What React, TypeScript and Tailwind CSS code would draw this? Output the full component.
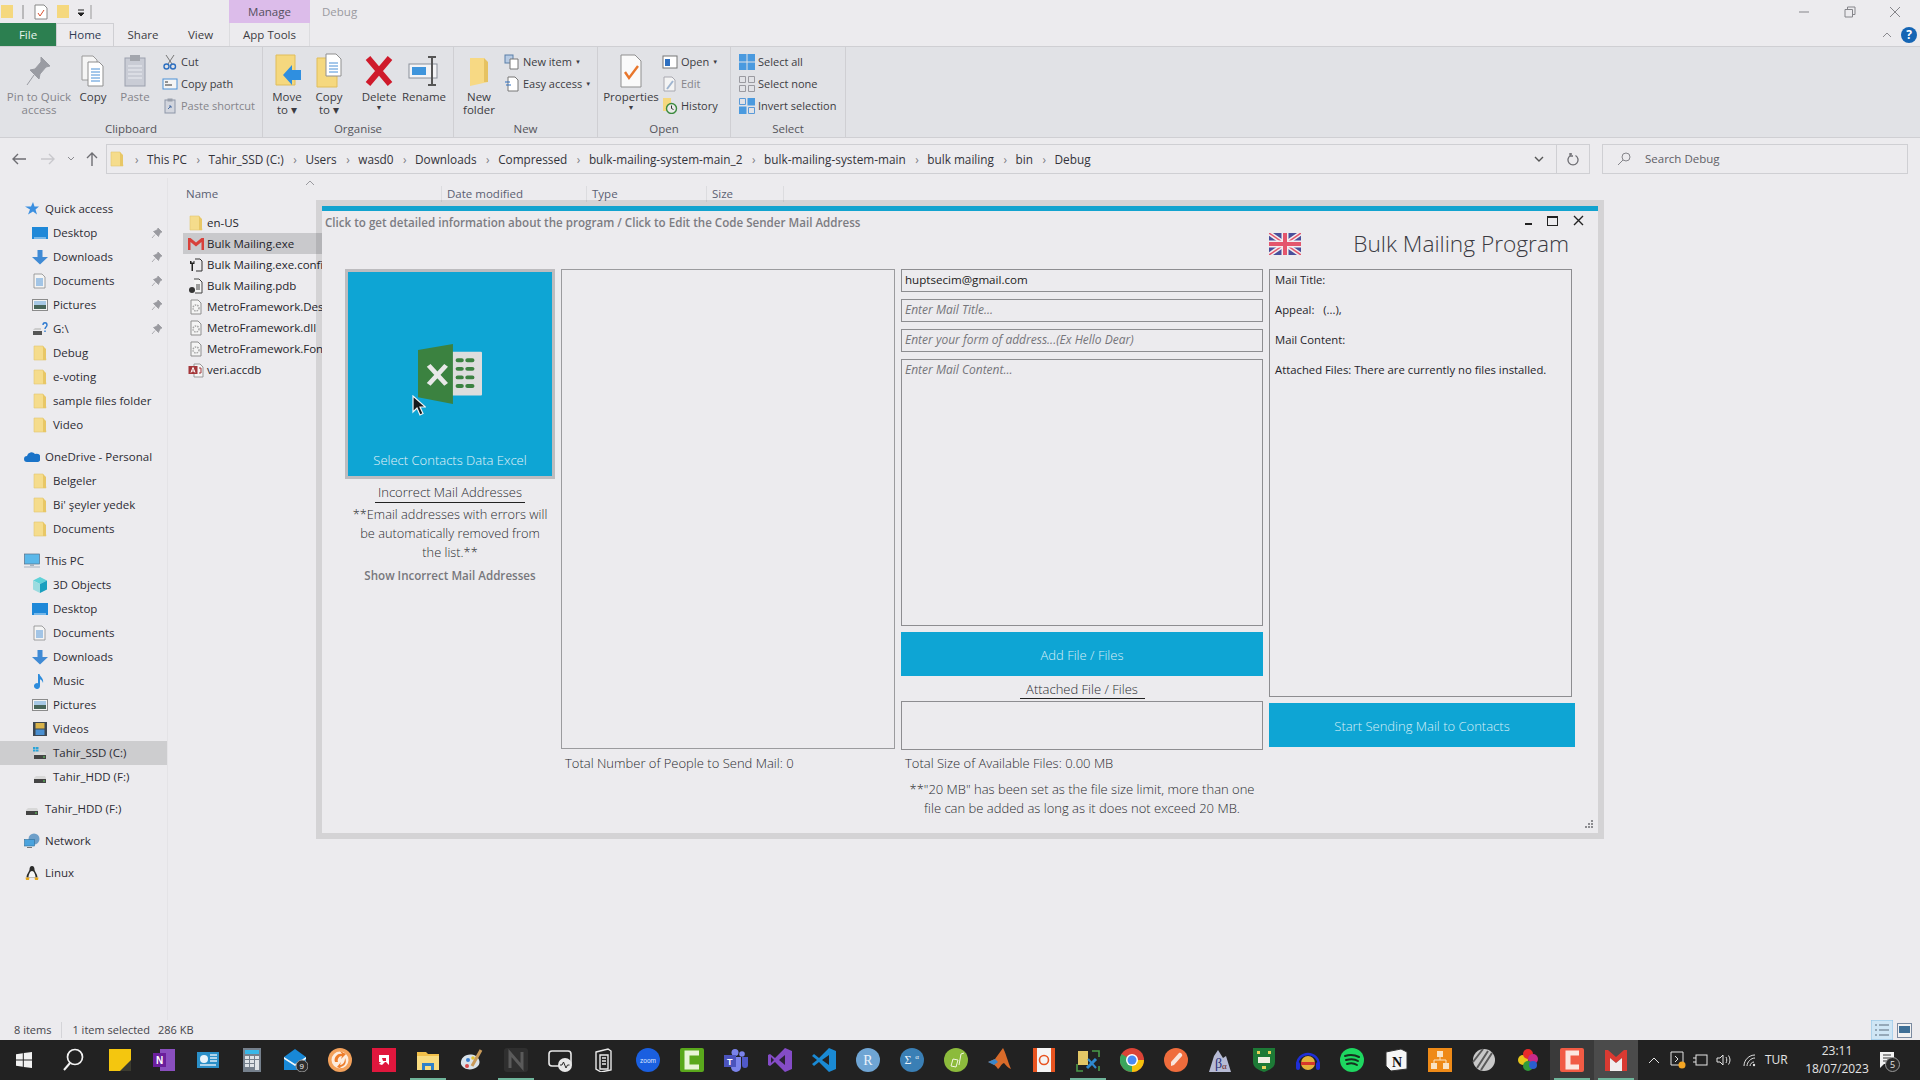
import type { ReactNode } from "react";

function Folder({ size = 16 }: { size?: number }) {
    return (
        <svg width={size} height={size} viewBox="0 0 16 16" className="shrink-0">
            <path d="M2 1h9l3 14H2z" fill="#f5dc8c" stroke="#e3c770" strokeWidth="0.6" />
            <path d="M11 1l3 3v11h-3z" fill="#e8c766" />
        </svg>
    );
}

function Pin() {
    return (
        <svg width="12" height="12" viewBox="0 0 12 12">
            <path d="M7 1l4 4-1.500.5L8 8 7.500 9.500 2.500 4.500 4 4l2.500-1.500zM4 7.500L1 11" fill="#9a9aa0" stroke="#9a9aa0" strokeWidth="0.8" />
        </svg>
    );
}

function Drive({ windows = false }: { windows?: boolean }) {
    return (
        <svg width="16" height="16" viewBox="0 0 16 16" className="shrink-0">
            {windows && <path d="M1 2h2.500v2H1zM4 2h2.500v2H4zM1 4.500h2.500v2H1zM4 4.500h2.500v2H4z" fill="#2aa4d8" />}
            <path d="M2 9l2-2h9l1 2v4H2z" fill="#d8d8d8" />
            <rect x="2" y="10" width="12" height="4" fill="#444" />
            <rect x="11" y="11.500" width="2" height="1" fill="#5fd35f" />
        </svg>
    );
}

function NavIcon({ kind }: { kind: string }) {
    if (kind === "folder") return <Folder />;
    if (kind === "drive") return <Drive />;
    if (kind === "ssd") return <Drive windows />;
    const body: Record<string, ReactNode> = {
        star: <path d="M9 1l1.500 4.500H15l-3.500 3 1.500 5-4-3-5 3 2-5-5-3h6z" fill="#3b8fe0" />,
        desktop: <><rect x="0" y="2" width="16" height="12" fill="#1e88d8" /><rect x="2" y="12.500" width="12" height="1" fill="#cfe8fa" /></>,
        down: <path d="M5.500 1h5v7H16l-8 7.500L0 8h5.500z" fill="#3f8ad4" />,
        doc: <><path d="M2 1h8l3 3v11H2z" fill="#f4f4f4" stroke="#8b8b8b" strokeWidth="0.8" /><path d="M4 6h7M4 8h7M4 10h7M4 12h7" stroke="#3f8ad4" strokeWidth="0.9" /></>,
        pic: <><rect x="0.500" y="2.500" width="15" height="11" fill="#f4f4f4" stroke="#8b8b8b" /><rect x="2" y="4" width="12" height="4" fill="#a7c9e6" /><rect x="2" y="8" width="12" height="4" fill="#47665a" /></>,
        g: <><path d="M1 9l2-2h6v2z" fill="#ccc" /><rect x="1" y="10" width="9" height="4" fill="#555" /><path d="M11 4c0-3 4-3 4 0 0 2-2 2-2 4M13 9.500v1.500" stroke="#2f7bd0" strokeWidth="1.400" fill="none" /></>,
        cloud: <path d="M3 13a3 3 0 0 1 0-6 4.500 4.500 0 0 1 8-2 3.500 3.500 0 0 1 3 8z" fill="#1a73c8" />,
        pc: <><rect x="0.500" y="1" width="15" height="10" fill="#5bb8ea" stroke="#55708a" strokeWidth="0.7" /><path d="M6 11h4v2H6zM0 13.500h16v1H0z" fill="#a8b4bf" /></>,
        cube: <><path d="M8 0l7 3.500-7 3.500-7-3.500z" fill="#5fd2d8" /><path d="M1 3.500L8 7v9l-7-3.500z" fill="#9bdce0" /><path d="M15 3.500L8 7v9l7-3.500z" fill="#1aa0bf" /></>,
        music: <path d="M6 1h1.500c.5 3 4.500 4 3.500 9-.3-2-2-3.500-3-3.800V13a3 3 0 1 1-2-2.800z" fill="#2d8cdc" />,
        video: <><rect x="1" y="1" width="14" height="14" fill="#3d4650" /><rect x="3.500" y="2" width="9" height="5.500" fill="#d9b34a" /><rect x="3.500" y="8.500" width="9" height="5.500" fill="#4a8fd0" /></>,
        net: <><circle cx="10" cy="6" r="5.500" fill="#6e9fc9" /><rect x="0.500" y="6.500" width="10" height="6.500" fill="#4ba3dd" stroke="#2d6f9c" strokeWidth="0.6" /><path d="M3 14.500h5" stroke="#777" /></>,
        linux: <><path d="M8 1c2 0 2.500 2 2.500 3.500 0 2 3 4.500 3 8H2.500c0-3.500 3-6 3-8C5.500 3 6 1 8 1z" fill="#2b2b2b" /><path d="M8 6c2 0 3.500 3.500 3.500 6.500h-7C4.500 9.500 6 6 8 6z" fill="#f6f6f6" /><path d="M1.500 12.500h4L5 15H2zM10.500 12.500h4L14 15h-3z" fill="#e8a91c" /></>,
    };
    return (
        <svg width="16" height="16" viewBox="0 0 16 16" className="shrink-0">
            {body[kind]}
        </svg>
    );
}

function NavRow({ icon, label, pin, root, selected, mt }: { icon: string; label: string; pin?: boolean; root?: boolean; selected?: boolean; mt?: boolean }) {
    return (
        <div className={`flex h-6 items-center ${root ? "pl-[24px]" : "pl-[32px]"} ${selected ? "bg-[#cdcdcf]" : ""} ${mt ? "mt-2" : ""}`}>
            <NavIcon kind={icon} />
            <span className="ml-[5px] flex-1 whitespace-nowrap">{label}</span>
            {pin && <span className="mr-[2px] w-[14px]"><Pin /></span>}
        </div>
    );
}

function FileIcon({ kind }: { kind: string }) {
    if (kind === "folder") return <Folder />;
    return (
        <svg width="16" height="16" viewBox="0 0 16 16" className="shrink-0">
            {kind === "gmail" && <path d="M0 14V2h2.500L8 6.500 13.500 2H16v12h-2.500V6L8 10.500 2.500 6v8z" fill="#d8403a" />}
            {kind === "config" && <><path d="M7 2h5l2 2v10H8" fill="none" stroke="#333" strokeWidth="1" /><path d="M2 4v3h1.500v7h1.500V7h1.500V4H5.500v1.500h-2V4z" fill="#222" /></>}
            {kind === "pdb" && <><path d="M6 1h5l3 3v11H7" fill="#f4f4f4" stroke="#444" /><path d="M8 7h4M8 9h4M8 11h4" stroke="#444" /><circle cx="4" cy="12" r="3" fill="#333" /></>}
            {kind === "dll" && <><path d="M3 1h7l3 3v11H3z" fill="#f4f4f4" stroke="#8f8f8f" /><circle cx="8" cy="9" r="3" fill="none" stroke="#a7a7a7" strokeWidth="1.500" strokeDasharray="1.500 1" /></>}
            {kind === "access" && <><path d="M6 2h6l3 3v10H6z" fill="#f4f4f4" stroke="#999" /><rect x="0.500" y="4" width="9" height="8" fill="#a4373a" /><path d="M11 6h2v5h-2" fill="none" stroke="#a4373a" /><path d="M3 10.500L5 5.500l2 5M3.700 9h2.600" stroke="#fff" fill="none" strokeWidth="1" /></>}
        </svg>
    );
}

function FileRow({ icon, label, selected }: { icon: string; label: string; selected?: boolean }) {
    return (
        <div className={`flex h-[21px] items-center overflow-hidden whitespace-nowrap pl-[5px] ${selected ? "bg-[#c9c9cc]" : ""}`}>
            <FileIcon kind={icon} />
            <span className="ml-[3px] text-[#24242a]">{label}</span>
        </div>
    );
}

function BigBtn({ w, children, lines, caret, muted }: { w: number; children: ReactNode; lines: string[]; caret?: boolean; muted?: boolean }) {
    return (
        <div style={{ width: w }} className={`flex shrink-0 flex-col items-center leading-[13px] ${muted ? "text-[#85858b]" : "text-[#3c3c42]"}`}>
            <div className="flex h-[38px] w-full items-center justify-center">{children}</div>
            {lines.map((l) => (
                <span key={l} className="block h-[13px] whitespace-nowrap">{l}</span>
            ))}
            {caret && <span className="text-[7px] leading-[10px]">▼</span>}
        </div>
    );
}

function SmallBtn({ icon, label, muted, caret }: { icon: ReactNode; label: string; muted?: boolean; caret?: boolean }) {
    return (
        <div className={`flex h-[22px] items-center gap-[3px] whitespace-nowrap text-[11px] ${muted ? "text-[#85858b]" : "text-[#3c3c42]"}`}>
            <span className="flex w-[16px] justify-center">{icon}</span>
            {label}
            {caret && <span className="text-[6px]">▼</span>}
        </div>
    );
}

function RibbonGroup({ w, label, children }: { w: number; label: string; children: ReactNode }) {
    return (
        <div style={{ width: w }} className="flex h-[90px] shrink-0 flex-col border-r border-[#cfcfd3]">
            <div className="flex flex-1 pt-[5px]">{children}</div>
            <div className="text-center text-[#55555b]">{label}</div>
        </div>
    );
}

function Ribbon() {
    const s16 = { width: 16, height: 16, viewBox: "0 0 16 16" };
    return (
        <div className="flex h-[92px] border-y border-[#cfcfd3] bg-[#e1e2e6]">
            <RibbonGroup w={263} label="Clipboard">
                <BigBtn w={78} lines={["Pin to Quick", "access"]} muted>
                    <svg width="26" height="32" viewBox="0 0 26 32"><path d="M15 2l9 9-4 1-6 7-1 5-9-9 5-1 6-7zM8 20l-7 10" fill="#9a9ca3" stroke="#9a9ca3" /></svg>
                </BigBtn>
                <BigBtn w={30} lines={["Copy"]}>
                    <svg width="26" height="32" viewBox="0 0 26 32"><path d="M2 1h11l4 4v20H2z" fill="#f5f5f5" stroke="#9a9a9a" /><path d="M8 7h11l4 4v20H8z" fill="#fff" stroke="#8f8f8f" /><path d="M11 14h9M11 17h9M11 20h9M11 23h9M11 26h9" stroke="#4a90d6" /></svg>
                </BigBtn>
                <BigBtn w={54} lines={["Paste"]} muted>
                    <svg width="24" height="34" viewBox="0 0 24 34"><rect x="2" y="4" width="20" height="28" fill="#c9ccd5" stroke="#9ba0ad" /><rect x="7" y="1" width="10" height="6" fill="#a3a6ad" /><path d="M5 12h14M5 16h14M5 20h14M5 24h14" stroke="#eceef3" /></svg>
                </BigBtn>
                <div className="-mt-[1px] flex flex-col">
                    <SmallBtn label="Cut" icon={<svg {...s16}><path d="M4 1l6 9M12 1L6 10" stroke="#777" strokeWidth="1" /><circle cx="4.500" cy="12.500" r="2.500" fill="none" stroke="#2d6fc0" strokeWidth="1.400" /><circle cx="11" cy="12.500" r="2.500" fill="none" stroke="#2d6fc0" strokeWidth="1.400" /></svg>} />
                    <SmallBtn label="Copy path" icon={<svg {...s16}><rect x="1" y="3" width="14" height="10" fill="#f4f4f4" stroke="#4a90d6" /><path d="M3 6h3M3 9h7" stroke="#333" /></svg>} />
                    <SmallBtn label="Paste shortcut" muted icon={<svg {...s16}><rect x="3" y="2" width="10" height="13" fill="#d3d6de" stroke="#8d96a8" /><rect x="5.500" y="0.500" width="5" height="3" fill="#9aa0ac" /><path d="M6 11l3-3M7 8h2v2" stroke="#4a6fa5" fill="none" /></svg>} />
                </div>
            </RibbonGroup>
            <RibbonGroup w={191} label="Organise">
                <div className="w-[4px]" />
                <BigBtn w={40} lines={["Move", "to ▾"]}>
                    <svg width="30" height="34" viewBox="0 0 30 34"><path d="M4 1h19v30H4z" fill="#f5d87e" stroke="#e0bd5a" /><path d="M29 16h-9v-5l-9 10 9 10v-5h9z" fill="#2f8fe0" /></svg>
                </BigBtn>
                <BigBtn w={44} lines={["Copy", "to ▾"]}>
                    <svg width="30" height="36" viewBox="0 0 30 36"><path d="M3 5h20v29H3z" fill="#f5d87e" stroke="#e0bd5a" /><path d="M12 1h10l5 5v17H12z" fill="#fff" stroke="#8f8f8f" /><path d="M15 10h9M15 13h9M15 16h9M15 19h9" stroke="#4a90d6" /></svg>
                </BigBtn>
                <div className="w-[6px]" />
                <BigBtn w={44} lines={["Delete"]} caret>
                    <svg width="28" height="32" viewBox="0 0 28 32"><path d="M3 3l22 26M25 3L3 29" stroke="#cf1a2b" strokeWidth="6" /></svg>
                </BigBtn>
                <div className="w-[2px]" />
                <BigBtn w={42} lines={["Rename"]}>
                    <svg width="32" height="34" viewBox="0 0 32 34"><rect x="1" y="10" width="28" height="14" fill="#f4f4f6" stroke="#8a8f99" /><rect x="4" y="13" width="14" height="8" fill="#3f95dc" /><path d="M20 3h8M24 3v28M20 31h8" stroke="#555" strokeWidth="2" /></svg>
                </BigBtn>
            </RibbonGroup>
            <RibbonGroup w={144} label="New">
                <BigBtn w={50} lines={["New", "folder"]}>
                    <svg width="22" height="34" viewBox="0 0 22 34"><path d="M2 4h14l4 24-18 4z" fill="#f7d984" /><path d="M16 4l4 4v20h-4z" fill="#e6c261" /></svg>
                </BigBtn>
                <div className="-mt-[1px] flex flex-col">
                    <SmallBtn label="New item" caret icon={<svg {...s16}><rect x="1" y="1" width="8" height="8" fill="#b7cbe4" stroke="#5a7fa8" /><path d="M6 5h8v10H6z" fill="#fff" stroke="#777" /></svg>} />
                    <SmallBtn label="Easy access" caret icon={<svg {...s16}><path d="M4 1h7l3 3v11H4z" fill="#fff" stroke="#777" /><path d="M1 6h5M2 9h5" stroke="#2d6fc0" /></svg>} />
                </div>
            </RibbonGroup>
            <RibbonGroup w={133} label="Open">
                <div className="w-[3px]" />
                <BigBtn w={60} lines={["Properties"]} caret>
                    <svg width="24" height="34" viewBox="0 0 24 34"><path d="M2 1h14l6 6v26H2z" fill="#fafafa" stroke="#8f8f8f" /><path d="M6 18l4 6 9-12" stroke="#e8762c" strokeWidth="2.400" fill="none" /></svg>
                </BigBtn>
                <div className="-mt-[1px] ml-[1px] flex flex-col">
                    <SmallBtn label="Open" caret icon={<svg {...s16}><rect x="1" y="2" width="14" height="12" fill="#fff" stroke="#777" /><rect x="3" y="5" width="5" height="7" fill="#2d6fc0" /></svg>} />
                    <SmallBtn label="Edit" muted icon={<svg {...s16}><path d="M2 1h8l3 3v11H2z" fill="#f4f4f4" stroke="#a8a8b0" /><path d="M5 13l6-8" stroke="#9fb5d0" strokeWidth="2" /></svg>} />
                    <SmallBtn label="History" icon={<svg {...s16}><rect x="1" y="0" width="8" height="13" fill="#f5d87e" /><circle cx="9.500" cy="10.500" r="5" fill="#e9e9e9" stroke="#3b8a3e" strokeWidth="1.400" /><path d="M9.500 7.500v3l2 1" stroke="#333" fill="none" /></svg>} />
                </div>
            </RibbonGroup>
            <RibbonGroup w={115} label="Select">
                <div className="-mt-[1px] ml-[8px] flex flex-col">
                    <SmallBtn label="Select all" icon={<svg {...s16}><path d="M0 0h7.500v7.500H0zM8.500 0H16v7.500H8.500zM0 8.500h7.500V16H0zM8.500 8.500H16V16H8.500z" fill="#4a9adf" /></svg>} />
                    <SmallBtn label="Select none" icon={<svg {...s16}><path d="M.5.5h6v6h-6zM9.500.5h6v6h-6zM.5 9.500h6v6h-6zM9.500 9.500h6v6h-6z" fill="none" stroke="#9a9aa0" /></svg>} />
                    <SmallBtn label="Invert selection" icon={<svg {...s16}><path d="M.5.5h6v6h-6zM9.500 9.500h6v6h-6z" fill="none" stroke="#5a9ad8" /><path d="M8.500 0H16v7.500H8.500zM0 8.500h7.500V16H0z" fill="#4a9adf" /></svg>} />
                </div>
            </RibbonGroup>
        </div>
    );
}

const crumbs = ["This PC", "Tahir_SSD (C:)", "Users", "wasd0", "Downloads", "Compressed", "bulk-mailing-system-main_2", "bulk-mailing-system-main", "bulk mailing", "bin", "Debug"];

function AddressBar() {
    return (
        <div className="flex h-[40px] items-center pt-[1px] text-[#4a4a50]">
            <div className="flex w-[106px] shrink-0 items-center text-[#77777c]">
                <svg width="16" height="14" viewBox="0 0 16 14" className="ml-[11px]"><path d="M15 7H2M7 2L2 7l5 5" stroke="#6e6e73" strokeWidth="1.400" fill="none" /></svg>
                <svg width="16" height="14" viewBox="0 0 16 14" className="ml-[13px]"><path d="M1 7h13M9 2l5 5-5 5" stroke="#c8c8cc" strokeWidth="1.400" fill="none" /></svg>
                <svg width="8" height="6" viewBox="0 0 8 6" className="ml-[11px]"><path d="M1 1l3 3 3-3" stroke="#8a8a8f" fill="none" /></svg>
                <svg width="14" height="16" viewBox="0 0 14 16" className="ml-[10px]"><path d="M7 15V2M2 7l5-5 5 5" stroke="#6e6e73" strokeWidth="1.400" fill="none" /></svg>
            </div>
            <div className="flex h-[30px] w-[1484px] items-center border border-[#cfcfd3] pl-[2px]">
                <Folder />
                <div className="flex flex-1 items-center whitespace-nowrap pl-[10px] text-[11.800px] text-[#33333a]">
                    {crumbs.map((c) => (
                        <span key={c} className="flex items-center">
                            <span className="mr-[8.500px] text-[#808085]">›</span>
                            <span className="mr-[9.500px]">{c}</span>
                        </span>
                    ))}
                </div>
                <div className="flex w-[34px] justify-center"><svg width="10" height="6" viewBox="0 0 10 6"><path d="M1 1l4 4 4-4" stroke="#555" strokeWidth="1.400" fill="none" /></svg></div>
                <div className="flex h-full w-[33px] items-center justify-center border-l border-[#cfcfd3]">
                    <svg width="12" height="14" viewBox="0 0 12 14"><path d="M5 2h-1.500M3 1v3h3M3.500 3.500a5 5 0 1 0 5 0" stroke="#6e6e73" strokeWidth="1.300" fill="none" /></svg>
                </div>
            </div>
            <div className="ml-[12px] flex h-[30px] w-[306px] items-center border border-[#cfcfd3] pl-[14px] text-[#606066]">
                <svg width="14" height="14" viewBox="0 0 14 14"><circle cx="9" cy="5" r="4" fill="none" stroke="#85858a" /><path d="M6 8l-5 5" stroke="#85858a" /></svg>
                <span className="ml-[14px]">Search Debug</span>
            </div>
        </div>
    );
}

function Sidebar() {
    return (
        <div className="w-[168px] shrink-0 border-r border-[#e4e3e6] pt-[19px] text-[#2c2c34]">
            <NavRow root icon="star" label="Quick access" />
            <NavRow icon="desktop" label="Desktop" pin />
            <NavRow icon="down" label="Downloads" pin />
            <NavRow icon="doc" label="Documents" pin />
            <NavRow icon="pic" label="Pictures" pin />
            <NavRow icon="g" label="G:\" pin />
            <NavRow icon="folder" label="Debug" />
            <NavRow icon="folder" label="e-voting" />
            <NavRow icon="folder" label="sample files folder" />
            <NavRow icon="folder" label="Video" />
            <NavRow root mt icon="cloud" label="OneDrive - Personal" />
            <NavRow icon="folder" label="Belgeler" />
            <NavRow icon="folder" label="Bi' şeyler yedek" />
            <NavRow icon="folder" label="Documents" />
            <NavRow root mt icon="pc" label="This PC" />
            <NavRow icon="cube" label="3D Objects" />
            <NavRow icon="desktop" label="Desktop" />
            <NavRow icon="doc" label="Documents" />
            <NavRow icon="down" label="Downloads" />
            <NavRow icon="music" label="Music" />
            <NavRow icon="pic" label="Pictures" />
            <NavRow icon="video" label="Videos" />
            <NavRow icon="ssd" label="Tahir_SSD (C:)" selected />
            <NavRow icon="drive" label="Tahir_HDD (F:)" />
            <NavRow root mt icon="drive" label="Tahir_HDD (F:)" />
            <NavRow root mt icon="net" label="Network" />
            <NavRow root mt icon="linux" label="Linux" />
        </div>
    );
}

function FileList() {
    return (
        <div className="flex-1 pl-[15px]">
            <div className="relative flex h-[29px] items-end pb-[5px] text-[#5a6072]">
                <span className="w-[258px] pl-[3px]">Name</span>
                <span className="w-[145px] border-l border-[#dcdcdf] pl-[5px]">Date modified</span>
                <span className="w-[120px] border-l border-[#dcdcdf] pl-[5px]">Type</span>
                <span className="w-[78px] border-x border-[#dcdcdf] pl-[5px]">Size</span>
                <svg width="10" height="6" viewBox="0 0 10 6" className="absolute left-[122px] top-[2px]"><path d="M1 5l4-4 4 4" stroke="#9a9a9f" fill="none" /></svg>
            </div>
            <div className="mt-[5px] w-[160px]">
                <FileRow icon="folder" label="en-US" />
                <FileRow icon="gmail" label="Bulk Mailing.exe" selected />
                <FileRow icon="config" label="Bulk Mailing.exe.config" />
                <FileRow icon="pdb" label="Bulk Mailing.pdb" />
                <FileRow icon="dll" label="MetroFramework.Design.dll" />
                <FileRow icon="dll" label="MetroFramework.dll" />
                <FileRow icon="dll" label="MetroFramework.Fonts.dll" />
                <FileRow icon="access" label="veri.accdb" />
            </div>
        </div>
    );
}

function UnionJack() {
    return (
        <svg width="32" height="22" viewBox="0 0 32 22">
            <rect width="32" height="22" fill="#4a4f9b" />
            <path d="M0 0l32 22M32 0L0 22" stroke="#f2eef0" strokeWidth="4.500" />
            <path d="M0 0l32 22M32 0L0 22" stroke="#e4566c" strokeWidth="1.500" />
            <path d="M16 0v22M0 11h32" stroke="#f2eef0" strokeWidth="7" />
            <path d="M16 0v22M0 11h32" stroke="#e4566c" strokeWidth="4" />
        </svg>
    );
}

function ExcelLogo() {
    return (
        <svg width="64" height="60" viewBox="0 0 66 70" preserveAspectRatio="none">
            <rect x="30" y="9" width="36" height="51" rx="1" fill="#dddddd" />
            <path d="M0 7L36 0v70L0 62z" fill="#3b8240" />
            <path d="M11 25l18 22M29 25L11 47" stroke="#e8e8e8" strokeWidth="5" />
            <path d="M41 19h4M41 29h4M41 39h4M41 49h4M51 19h5M51 29h5M51 39h5M51 49h5" stroke="#3b8240" strokeWidth="4.500" strokeLinecap="round" />
        </svg>
    );
}

function Cursor() {
    return (
        <svg width="14" height="22" viewBox="0 0 14 22" className="absolute left-[64px] top-[123px]">
            <path d="M1 1v16l4-4 3 7 3-1.500-3-6.500h5.500z" fill="#15191c" stroke="#f4f4f4" strokeWidth="1.200" />
        </svg>
    );
}

function AppField({ text, placeholder, h = 23 }: { text?: string; placeholder?: string; h?: number }) {
    return (
        <div style={{ height: h }} className={`flex border border-[#8d8d90] px-[3px] ${h > 30 ? "items-start pt-[1px]" : "items-center pb-[1px]"}`}>
            {placeholder ? <span className="text-[12px] italic text-[#75757a]">{placeholder}</span> : <span className="text-[11.600px] text-[#1c1c22]">{text}</span>}
        </div>
    );
}

function MailWindow() {
    return (
        <div className="absolute left-[316px] top-[200px] z-10 h-[639px] w-[1288px] border-[6px] border-black/10 bg-[#ecebee] bg-clip-padding text-[13px] leading-[18px]">
            <div className="h-[5px] bg-[#12a3cf]" />
            <div className="relative h-[58px]">
                <div className="pl-[3px] pt-[3px] text-[11.600px] font-semibold text-[#7c7c82]">
                    Click to get detailed information about the program / Click to Edit the Code Sender Mail Address
                </div>
                <div className="absolute right-[14px] top-[4px] flex items-center gap-[15px]">
                    <div className="mt-[7px] h-[2px] w-[7px] bg-[#222]" />
                    <div className="h-[10px] w-[11px] border border-t-2 border-[#222]" />
                    <svg width="11" height="11" viewBox="0 0 11 11"><path d="M1 1l9 9M10 1l-9 9" stroke="#222" strokeWidth="1.400" /></svg>
                </div>
                <div className="absolute left-[947px] top-[17px] flex w-[300px] items-center justify-between">
                    <UnionJack />
                    <span className="text-[22.700px] font-light leading-[32px] text-[#3a3a42]">Bulk Mailing Program</span>
                </div>
            </div>
            <div className="flex gap-[6px] pl-[23px] font-light text-[#2b2b30]">
                <div className="flex w-[210px] flex-col items-center text-center">
                    <div className="relative flex h-[210px] w-full flex-col items-center border-[3px] border-[#bdbcbf] bg-[#0ea5d4] text-[#e4f2f8]">
                        <div className="mt-[72px] leading-none"><ExcelLogo /></div>
                        <Cursor />
                        <div className="mt-auto pb-[7px]">Select Contacts Data Excel</div>
                    </div>
                    <div className="mt-[4px] w-[150px] border-b border-[#222] pb-[1px] leading-[18px]">Incorrect Mail Addresses</div>
                    <div className="mt-[2px] w-[200px] text-[12.800px] leading-[19px]">**Email addresses with errors will be automatically removed from the list.**</div>
                    <div className="mt-[5px] text-[11.600px] font-semibold text-[#77777c]">Show Incorrect Mail Addresses</div>
                </div>
                <div className="w-[334px]">
                    <div className="h-[480px] border border-[#9b9b9e]" />
                    <div className="pl-[4px] pt-[5px]">Total Number of People to Send Mail: 0</div>
                </div>
                <div className="flex w-[362px] flex-col">
                    <div className="flex flex-col gap-[7px] font-normal">
                        <AppField text="huptsecim@gmail.com" />
                        <AppField placeholder="Enter Mail Title..." />
                        <AppField placeholder="Enter your form of address...(Ex Hello Dear)" />
                        <AppField h={267} placeholder="Enter Mail Content..." />
                    </div>
                    <div className="mt-[6px] flex h-[44px] items-center justify-center bg-[#0ea5d4] pt-[1px] text-[#d8eef7]">Add File / Files</div>
                    <div className="mx-auto mt-[5px] w-[125px] border-b border-[#222] text-center leading-[17px]">Attached File / Files</div>
                    <div className="mt-[2px] h-[49px] border border-[#8d8d90]" />
                    <div className="pl-[4px] pt-[4px]">Total Size of Available Files: 0.00 MB</div>
                    <div className="mt-[8px] px-[2px] text-center leading-[18.500px]">**"20 MB" has been set as the file size limit, more than one file can be added as long as it does not exceed 20 MB.</div>
                </div>
                <div className="w-[306px]">
                    <div className="h-[428px] w-[303px] border border-[#8d8d90] px-[5px] pt-[1px] text-[11.300px] font-normal text-[#24242a]">
                        <div className="leading-[18px]">Mail Title:</div>
                        <div className="mt-[12px] leading-[18px]">Appeal: &nbsp; (...),</div>
                        <div className="mt-[12px] leading-[18px]">Mail Content:</div>
                        <div className="mt-[12px] leading-[18px]">Attached Files: There are currently no files installed.</div>
                    </div>
                    <div className="mt-[6px] flex h-[44px] items-center justify-center bg-[#0ea5d4] pt-[1px] text-[#d8eef7]">Start Sending Mail to Contacts</div>
                </div>
            </div>
            <svg width="10" height="10" viewBox="0 0 10 10" className="absolute bottom-[4px] right-[4px]">
                <path d="M7 1h2v2H7zM4 4h2v2H4zM7 4h2v2H7zM1 7h2v2H1zM4 7h2v2H4zM7 7h2v2H7z" fill="#8c8c90" />
            </svg>
        </div>
    );
}

// taskbar icons, 24 x 24 unless the mark is narrower
const taskIcons: ReactNode[] = [
    <><rect x="1" y="1" width="22" height="22" fill="#f4c60f" /><path d="M12 23l11-11v11z" fill="#3b3b30" /></>,
    <><rect x="8" y="1" width="15" height="22" fill="#8a4fbf" /><rect x="1" y="5" width="13" height="14" fill="#6b1f9c" /><text x="4" y="16" fontSize="10" fontWeight="700" fill="#fff" fontFamily="Liberation Sans">N</text></>,
    <><rect x="1" y="4" width="22" height="16" fill="#2a8fc8" /><circle cx="8" cy="11" r="4" fill="#e8f3fa" /><path d="M14 7h7M14 10h7M14 13h7M4 17h16" stroke="#dcecf6" strokeWidth="1.300" /></>,
    <><rect x="3" y="0" width="18" height="24" fill="#75808c" /><rect x="5" y="2" width="14" height="4" fill="#38b7e8" /><path d="M5 8h4v3H5zM10 8h4v3h-4zM15 8h4v3h-4zM5 12h4v3H5zM10 12h4v3h-4zM15 12h4v10h-4zM5 16h4v3H5zM10 16h4v3h-4z" fill="#dfe4e8" /></>,
    <><path d="M0 9L11 1l11 8v13H0z" fill="#1888d6" /><path d="M0 9l11 7 11-7v2L11 18 0 11z" fill="#f2f8fc" /><circle cx="18" cy="18" r="6" fill="#2d2d2d" stroke="#999" /><text x="15.500" y="21" fontSize="8" fill="#eee" fontFamily="Liberation Sans">9</text></>,
    <><circle cx="12" cy="12" r="12" fill="#f3a15b" /><circle cx="12" cy="12" r="8.500" fill="#fff" opacity="0.800" /><path d="M7 14a6 6 0 0 1 7-8l-2-3 6 3-5 5 1-3c-3 0-5 3-4 6zM17 10a6 6 0 0 1-5 9l2 2-5-2 4-5-1 3c3 0 5-3 5-7z" fill="#ee7d2a" /></>,
    <><rect x="0" y="0" width="24" height="24" fill="#e0173d" /><path d="M7 7h10v10l-3-3H7zM10 17l3-3H9l-2 2z" fill="#fff" /><path d="M10 10h4v3h-3z" fill="#e0173d" /></>,
    <><path d="M1 4h9l2 2h11v16H1z" fill="#f2c04a" /><rect x="1" y="8" width="22" height="14" fill="#f9dc80" /><rect x="6" y="15" width="12" height="7" fill="#2f80c8" /><rect x="9" y="18" width="6" height="4" fill="#f9dc80" /></>,
    <><path d="M1 16c-1-7 7-12 15-8 4 3 5 8 1 11-5 4-14 3-16-3z" fill="#d9e3ea" /><circle cx="8" cy="12" r="2" fill="#3a7fd0" /><circle cx="13" cy="10" r="1.800" fill="#e2c230" /><circle cx="7" cy="18" r="2" fill="#d94a4a" /><path d="M12 18L21 2" stroke="#c89a5a" strokeWidth="3" /></>,
    <><rect x="0" y="0" width="24" height="24" rx="3" fill="#2f2f2f" /><path d="M6 20V5l12 14V4" stroke="#5a5a5a" strokeWidth="3" fill="none" /></>,
    <><rect x="1" y="3" width="22" height="15" rx="3" fill="none" stroke="#e8e8e8" strokeWidth="1.600" /><circle cx="17" cy="17" r="7" fill="#e8e8e8" /><path d="M12 17h2l1.500-3 2.500 6 1.500-3h2" stroke="#2a2a2a" fill="none" /></>,
    <><path d="M4 4l12-3 3 2v19l-10 2-5-3z" fill="#222" stroke="#e8e8e8" strokeWidth="1.400" /><path d="M8 7h8v14H8z" fill="none" stroke="#e8e8e8" strokeWidth="1.400" /><path d="M10 10h4M10 13h4M10 16h4" stroke="#e8e8e8" strokeWidth="1.400" /></>,
    <><circle cx="12" cy="12" r="12" fill="#1a5fe0" /><text x="12" y="14.500" fontSize="6.500" textAnchor="middle" fill="#dfe9ff" fontFamily="Liberation Sans">zoom</text></>,
    <><rect width="24" height="24" rx="2" fill="#5aa81c" /><path d="M19 5H7v14h12" stroke="#e8f5d8" strokeWidth="5" fill="none" /></>,
    <><circle cx="18" cy="6" r="2.800" fill="#7b83eb" /><circle cx="11" cy="4.500" r="3.500" fill="#7b83eb" /><path d="M7 9h10v10a5 5 0 0 1-10 0z" fill="#7b83eb" /><path d="M18 9h6v8a3 3 0 0 1-6 0z" fill="#5059c9" /><rect x="0" y="7" width="12" height="12" fill="#4b53bc" /><text x="3" y="16.500" fontSize="9" fontWeight="700" fill="#fff" fontFamily="Liberation Sans">T</text></>,
    <><path d="M17 0l7 3v18l-7 3L7 14l-5 4-2-1V7l2-1 5 4z" fill="#854cc7" /><path d="M17 7v10l-6-5z" fill="#2b2136" /><path d="M3 9l3 3-3 3z" fill="#2b2136" /></>,
    <><path d="M17 0l7 3v18l-7 3-10-10-5 4-2-2 5-4-5-4 2-2 5 4z" fill="#1a8ad4" /><path d="M17 7v10l-7-5z" fill="#232323" /></>,
    <><circle cx="12" cy="12" r="12" fill="#6fa5d4" /><text x="12" y="17" fontSize="14" textAnchor="middle" fill="#eaf2fa" fontFamily="Liberation Serif">R</text></>,
    <><circle cx="12" cy="12" r="12" fill="#3a7fb5" /><text x="8" y="16" fontSize="12" textAnchor="middle" fill="#eaf2fa" fontFamily="Liberation Serif">Σ</text><text x="17" y="11" fontSize="7" textAnchor="middle" fill="#eaf2fa" fontFamily="Liberation Serif">α</text></>,
    <><circle cx="12" cy="12" r="12" fill="#8cbb3c" /><path d="M7 18l2-7 5 1-2 7zM15 17l2-11 3-1" stroke="#f0f6e0" fill="none" /></>,
    <><path d="M0 14l7-3L15 0c2 3 5 14 8 21-3-1-5-4-7-6-3 1-4 5-6 6-2-3-5-6-10-7z" fill="#d96b2a" /><path d="M0 14l7-3 3 3-4 3z" fill="#3a86c8" /></>,
    <><rect x="1" y="0" width="22" height="24" fill="#f4f4f4" /><rect x="1" y="0" width="4" height="24" fill="#e85420" /><rect x="19" y="0" width="4" height="24" fill="#e85420" /><circle cx="12" cy="12" r="4.500" fill="none" stroke="#e85420" strokeWidth="1.600" /></>,
    <><path d="M2 3h10v14H2z" fill="#e3c766" /><path d="M1 16v7h6M16 3h7v6M23 18v5" stroke="#4a9a4a" strokeWidth="1.600" fill="none" /><path d="M11 20l9-9" stroke="#2f8ad0" strokeWidth="3" /><path d="M12 11l8 9" stroke="#2f8ad0" strokeWidth="2" /></>,
    <><circle cx="12" cy="12" r="12" fill="#db4437" /><path d="M12 12L1.500 6A12 12 0 0 0 12 24z" fill="#3ba55c" /><path d="M12 12h12A12 12 0 0 1 12 24z" fill="#f4c20d" /><circle cx="12" cy="12" r="6" fill="#fff" /><circle cx="12" cy="12" r="4.500" fill="#4a8af4" /></>,
    <><circle cx="12" cy="12" r="12" fill="#ef6c3c" /><path d="M7 18l3-1 8-9c1-2-2-4-3-3L7 14z" fill="#f9e5dc" /></>,
    <><path d="M1 24L6 8l4-6 5 8 3-2 5 16z" fill="#b7bbd4" /><text x="7" y="20" fontSize="14" fill="#2a2f7a" fontFamily="Liberation Serif">β</text><text x="14" y="21" fontSize="9" fill="#6b2222" fontFamily="Liberation Serif">α</text></>,
    <><path d="M1 0h22v14c0 6-6 8-11 10-5-2-11-4-11-10z" fill="#1d7a36" /><path d="M4 2h16v5H4z" fill="#1d7a36" /><path d="M5 3h3v3H5zM16 3h3v3h-3zM10 18h4v3h-4z" fill="#e5d15a" /><rect x="6" y="9" width="12" height="6" fill="#f1efe3" /></>,
    <><path d="M1 17a11 11 0 0 1 22 0" fill="none" stroke="#1f2fd6" strokeWidth="2.400" /><rect x="0" y="14" width="4" height="8" rx="2" fill="#1f2fd6" /><rect x="20" y="14" width="4" height="8" rx="2" fill="#1f2fd6" /><ellipse cx="12" cy="15" rx="7" ry="7" fill="#e2b23a" /><rect x="5" y="14" width="14" height="3" fill="#d6372c" /></>,
    <><circle cx="12" cy="12" r="12" fill="#1ed760" /><path d="M5 8c5-1.500 10-1 14 1M6 12c4-1 9-1 12 1M7 16c3-1 7-1 10 1" stroke="#16301f" strokeWidth="2" fill="none" strokeLinecap="round" /></>,
    <><path d="M2 4l15-3 6 3v17l-16 2-5-5z" fill="#f6f6f6" stroke="#333" /><text x="13" y="19" fontSize="14" fontWeight="700" textAnchor="middle" fill="#111" fontFamily="Liberation Serif">N</text></>,
    <><rect width="24" height="24" fill="#ef8a17" /><path d="M9 3h6v6H9zM3 15h6v6H3zM15 15h6v6h-6z" fill="#f9e3c4" /><path d="M12 9v3H6v3M12 12h6v3" stroke="#f9e3c4" fill="none" /></>,
    <><circle cx="12" cy="12" r="11" fill="#c8c8c8" /><path d="M5 20L16 3M9 22L20 5M1 14L11 1" stroke="#5a5a5a" strokeWidth="2" /></>,
    <><circle cx="7" cy="12" r="5" fill="#e8c61a" /><circle cx="12" cy="6" r="5" fill="#e82a2a" /><circle cx="17" cy="11" r="5" fill="#c82a8a" /><circle cx="12" cy="18" r="5" fill="#2f9a3a" /><circle cx="17" cy="17" r="4" fill="#2a5fd0" /></>,
];

function TaskSlot({ children, active, bg }: { children: ReactNode; active?: boolean; bg?: string }) {
    return (
        <div className={`relative flex h-full w-[44px] items-center justify-center ${bg ?? ""}`}>
            <svg width="24" height="24" viewBox="0 0 24 24">{children}</svg>
            {active && <div className="absolute bottom-0 left-[4px] right-[4px] h-[2px] bg-[#6fb59b]" />}
        </div>
    );
}

function Taskbar() {
    const activeIdx = [7, 9, 22];
    return (
        <div className="flex h-[40px] items-center bg-[#222222] text-[#e4e4e4]">
            <div className="flex h-full w-[48px] items-center justify-center">
                <svg width="16" height="16" viewBox="0 0 16 16"><path d="M0 2.200L6.800 1.200V7.500H0zM7.800 1.100L16 0v7.500H7.800zM0 8.500h6.800v6.300L0 13.800zM7.800 8.500H16V16l-8.200-1.100z" fill="#f2f2f2" /></svg>
            </div>
            <div className="flex h-full w-[50px] items-center justify-center">
                <svg width="22" height="24" viewBox="0 0 22 24"><circle cx="13" cy="9" r="7.500" fill="none" stroke="#f2f2f2" strokeWidth="1.700" /><path d="M8 15l-6 7" stroke="#f2f2f2" strokeWidth="2" /></svg>
            </div>
            {taskIcons.map((ic, i) => (
                <TaskSlot key={i} active={activeIdx.includes(i)}>{ic}</TaskSlot>
            ))}
            <TaskSlot active bg="bg-[#3a3a3a]">
                <rect width="24" height="24" rx="2" fill="#f15b44" /><path d="M19 5H8v14h11" stroke="#fbe6df" strokeWidth="5" fill="none" />
            </TaskSlot>
            <TaskSlot active bg="bg-[#4b4b4b]">
                <path d="M1 23V2h3l8 7 8-7h3v21h-5V10l-6 5-6-5v13z" fill="#d93a32" /><path d="M6 10l6 5 6-5v13H6z" fill="#f1eeee" />
            </TaskSlot>
            <div className="flex flex-1 items-center text-[12px]">
                <svg width="12" height="8" viewBox="0 0 12 8" className="ml-[10px]"><path d="M1 7l5-5 5 5" stroke="#e4e4e4" fill="none" /></svg>
                <svg width="18" height="20" viewBox="0 0 18 20" className="ml-[8px]"><path d="M3 2h12v13H3z" fill="none" stroke="#e4e4e4" /><path d="M7 6l3 3-3 3" stroke="#e4e4e4" fill="none" /><circle cx="14" cy="15" r="3.500" fill="#f5a623" /></svg>
                <svg width="16" height="14" viewBox="0 0 16 14" className="ml-[6px]"><rect x="4" y="2" width="11" height="10" fill="none" stroke="#e4e4e4" /><path d="M1 5h3M1 9h3" stroke="#e4e4e4" /></svg>
                <svg width="16" height="14" viewBox="0 0 16 14" className="ml-[8px]"><path d="M1 5h3l3-3v10L4 9H1zM10 4c1 2 1 4 0 6M12.500 2.500c2 3 2 6 0 9" stroke="#e4e4e4" fill="none" /></svg>
                <svg width="16" height="14" viewBox="0 0 16 14" className="ml-[10px]"><path d="M2 13c0-6 5-11 11-11M5 13c0-4 4-8 8-8M8 13c0-2 2-4 4-4" stroke="#e4e4e4" fill="none" /><circle cx="12" cy="12" r="1.200" fill="#e4e4e4" /></svg>
                <span className="ml-[7px] w-[26px]">TUR</span>
                <div className="ml-[8px] w-[76px] text-center leading-[18px]">
                    <div>23:11</div>
                    <div>18/07/2023</div>
                </div>
                <div className="relative ml-[3px]">
                    <svg width="18" height="18" viewBox="0 0 18 18"><path d="M2 1h14v12H6l-4 4z" fill="#f2f2f2" /><path d="M5 4h8M5 7h8M5 10h8" stroke="#333" /></svg>
                    <span className="absolute left-[7px] top-[6px] flex h-[15px] w-[15px] items-center justify-center rounded-full border border-[#999] bg-[#2a2a2a] text-[9px] leading-none">5</span>
                </div>
            </div>
        </div>
    );
}

export default function App() {
    return (
        <div className="relative flex h-[1080px] w-[1920px] flex-col overflow-hidden bg-[#ecebee] font-['Open_Sans','Noto_Sans',sans-serif] text-[11.500px] leading-[16px]">
            <div className="flex h-[23px] items-center justify-between">
                <div className="flex h-full items-center">
                    <svg width="92" height="16" viewBox="0 0 92 16">
                        <path d="M1 1h12v13H1z" fill="#f5d87e" />
                        <path d="M23 1v14" stroke="#888" />
                        <path d="M35 1h9l3 3v11H35z" fill="#fff" stroke="#888" /><path d="M38 9l2 3 4-6" stroke="#d94f2f" fill="none" />
                        <path d="M57 1h12v13H57z" fill="#f5d87e" />
                        <path d="M78 6h6M78 9h6l-3 3z" stroke="#222" fill="#222" />
                        <path d="M91 1v14" stroke="#999" />
                    </svg>
                    <div className="ml-[137px] flex h-full w-[81px] items-center justify-center bg-[#dcbcea] text-[#55505e]">Manage</div>
                    <span className="ml-[12px] text-[#9a9aa0]">Debug</span>
                </div>
                <div className="flex items-center text-[#808085]">
                    <svg width="12" height="12" viewBox="0 0 12 12" className="mr-[34px]"><path d="M1 6h10" stroke="#85858a" /></svg>
                    <svg width="12" height="12" viewBox="0 0 12 12" className="mr-[33px]"><path d="M1 3.500h7.500V11H1zM3.500 3.500V1H11v7.500H8.500" fill="none" stroke="#85858a" /></svg>
                    <svg width="12" height="12" viewBox="0 0 12 12" className="mr-[19px]"><path d="M1 1l10 10M11 1L1 11" stroke="#85858a" /></svg>
                </div>
            </div>
            <div className="relative flex h-[23px] items-end">
                <div className="flex h-[23px] w-[56px] items-center justify-center bg-[#2c7f50] text-[#e8f4ec]">File</div>
                <div className="flex h-[23px] w-[58px] items-center justify-center border-x border-t border-[#cfcfd3] text-[#2f3a52]">Home</div>
                <div className="flex h-[23px] w-[58px] items-center justify-center text-[#3c3c42]">Share</div>
                <div className="flex h-[23px] w-[57px] items-center justify-center text-[#3c3c42]">View</div>
                <div className="flex h-[23px] w-[81px] items-center justify-center border-x border-[#dcdcdf] text-[#3c3c42]">App Tools</div>
                <div className="ml-auto mr-[3px] flex items-center gap-[9px] pb-[3px]">
                    <svg width="10" height="6" viewBox="0 0 10 6"><path d="M1 5l4-4 4 4" stroke="#8a8a8f" fill="none" /></svg>
                    <span className="flex h-[16px] w-[16px] items-center justify-center rounded-full bg-[#1565b4] text-[12px] font-bold leading-none text-white">?</span>
                </div>
            </div>
            <Ribbon />
            <AddressBar />
            <div className="flex flex-1">
                <Sidebar />
                <FileList />
            </div>
            <div className="relative flex h-[20px] items-center pl-[14px] text-[11px] text-[#44444a]">
                <span>8 items</span>
                <span className="ml-[10px] border-l border-[#d4d4d8] pl-[10px]">1 item selected</span>
                <span className="ml-[8px]">286 KB</span>
                <div className="absolute right-[8px] top-0 flex items-center gap-[4px]">
                    <svg width="22" height="20" viewBox="0 0 22 20"><rect width="22" height="20" fill="#cfe6f5" stroke="#8ac0e4" /><path d="M4 5h2M8 5h10M4 10h2M8 10h10M4 15h2M8 15h10" stroke="#5a6a7a" /></svg>
                    <svg width="15" height="15" viewBox="0 0 15 15"><rect x="0.500" y="0.500" width="14" height="14" fill="#f2f2f2" stroke="#7a8aa0" /><rect x="2" y="3" width="11" height="7" fill="#3f6f96" /></svg>
                </div>
            </div>
            <Taskbar />
            <MailWindow />
        </div>
    );
}
